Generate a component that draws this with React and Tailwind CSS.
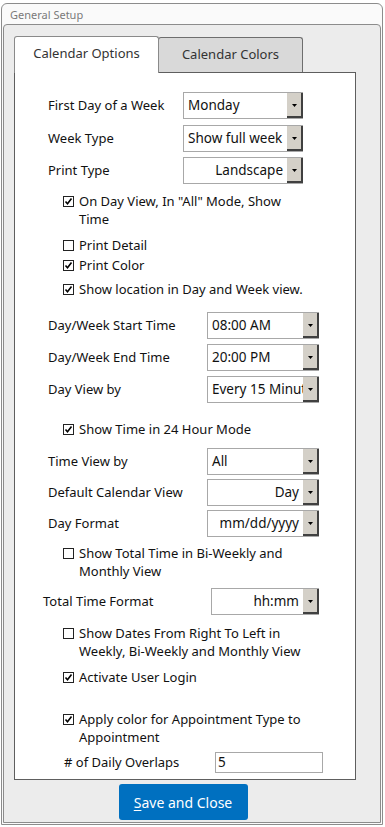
import React from 'react';

const font = { fontFamily: '"Noto Sans", "Open Sans", sans-serif' };

const Arrow = () => (
  <svg width="5" height="3" viewBox="0 0 5 3" className="mt-[2px]">
    <polygon points="0,0 5,0 2.5,3" fill="#000" />
  </svg>
);

const Select = ({ value, w, right }) => (
  <div className={`relative flex h-[27px] border border-[#a8a8a8] bg-white ${w}`}>
    <div
      className={`flex-1 overflow-hidden whitespace-nowrap leading-[25px] text-[13.5px] text-[#111] ${
        right ? 'pr-[4px] text-right' : 'pl-[4px]'
      }`}
    >
      {value}
    </div>
    <div className="-mr-[1px] flex w-[16px] items-center justify-center border-r-2 border-b-2 border-[#404040] bg-[#d4d0c8]">
      <Arrow />
    </div>
  </div>
);

const Box = ({ checked }) => (
  <div className="mt-[4px] flex h-[11px] w-[11px] shrink-0 items-center justify-center border border-[#222] bg-white">
    {checked && (
      <svg width="9" height="9" viewBox="0 0 9 9">
        <path d="M1.5 4.5 L3.5 6.8 L7.5 1.5" stroke="#000" strokeWidth="1.6" fill="none" />
      </svg>
    )}
  </div>
);

const Check = ({ checked, children, mt }) => (
  <div className={`flex gap-[5px] pl-[48px] leading-[18px] ${mt}`}>
    <Box checked={checked} />
    <div className="w-[230px]">{children}</div>
  </div>
);

const Row = ({ label, lw, pl, mt, children }) => (
  <div className={`flex items-center ${pl} ${mt}`}>
    <div className={`shrink-0 ${lw}`}>{label}</div>
    {children}
  </div>
);

export default function App() {
  return (
    <div className="min-h-[827px] bg-white pt-[3px] pl-[1px]" style={font}>
      <div className="w-[382px] rounded-t-[6px] border border-[#8c8c8c] bg-[#fafafa] px-[1px] pb-[1px]">
        <div className="h-[20px] pl-[7px] text-[11px] leading-[22px] text-[#7a7a7a]">General Setup</div>
        <div className="h-[799px] rounded-t-[4px] border border-[#8c8c8c] bg-[#ececec] pl-[10px] pt-[11px]">
          <div className="flex items-end">
            <div className="relative z-10 -mb-[1px] flex h-[37px] w-[145px] items-center justify-center rounded-t-[3px] border border-b-0 border-[#8a8a8a] bg-white pb-[2px] text-[13px] text-[#333]">
              Calendar Options
            </div>
            <div className="-ml-[1px] flex h-[35px] w-[145px] items-center justify-center rounded-t-[3px] border border-b-0 border-[#6e6e6e] bg-[#d9d9d9] text-[13px] text-[#333]">
              Calendar Colors
            </div>
          </div>
          <div className="h-[708px] w-[342px] border border-[#5e5e5e] bg-white text-[13px] text-[#111]">
            <Row label="First Day of a Week" lw="w-[135px]" pl="pl-[33px]" mt="mt-[19px]">
              <Select value="Monday" w="w-[120px]" />
            </Row>
            <Row label="Week Type" lw="w-[135px]" pl="pl-[33px]" mt="mt-[6px]">
              <Select value="Show full week" w="w-[120px]" />
            </Row>
            <Row label="Print Type" lw="w-[135px]" pl="pl-[33px]" mt="mt-[5px]">
              <Select value="Landscape" w="w-[120px]" right />
            </Row>
            <Check checked mt="mt-[8px]">On Day View, In "All" Mode, Show Time</Check>
            <Check mt="mt-[8px]">Print Detail</Check>
            <Check checked mt="mt-[2px]">Print Color</Check>
            <Check checked mt="mt-[6px]">Show location in Day and Week view.</Check>
            <Row label="Day/Week Start Time" lw="w-[159px]" pl="pl-[33px]" mt="mt-[14px]">
              <Select value="08:00 AM" w="w-[112px]" />
            </Row>
            <Row label="Day/Week End Time" lw="w-[159px]" pl="pl-[33px]" mt="mt-[5px]">
              <Select value="20:00 PM" w="w-[112px]" />
            </Row>
            <Row label="Day View by" lw="w-[159px]" pl="pl-[33px]" mt="mt-[5px]">
              <Select value="Every 15 Minutes" w="w-[112px]" />
            </Row>
            <Check checked mt="mt-[17px]">Show Time in 24 Hour Mode</Check>
            <Row label="Time View by" lw="w-[159px]" pl="pl-[33px]" mt="mt-[10px]">
              <Select value="All" w="w-[112px]" />
            </Row>
            <Row label="Default Calendar View" lw="w-[159px]" pl="pl-[33px]" mt="mt-[4px]">
              <Select value="Day" w="w-[112px]" right />
            </Row>
            <Row label="Day Format" lw="w-[159px]" pl="pl-[33px]" mt="mt-[4px]">
              <Select value="mm/dd/yyyy" w="w-[112px]" right />
            </Row>
            <Check mt="mt-[7px]">Show Total Time in Bi-Weekly and Monthly View</Check>
            <Row label="Total Time Format" lw="w-[168px]" pl="pl-[28px]" mt="mt-[8px]">
              <Select value="hh:mm" w="w-[108px]" right />
            </Row>
            <Check mt="mt-[9px]">Show Dates From Right To Left in Weekly, Bi-Weekly and Monthly View</Check>
            <Check checked mt="mt-[8px]">Activate User Login</Check>
            <Check checked mt="mt-[24px]">Apply color for Appointment Type to Appointment</Check>
            <Row label="# of Daily Overlaps" lw="w-[151px]" pl="pl-[49px]" mt="mt-[6px]">
              <div className="h-[21px] w-[108px] border border-[#a8a8a8] pl-[2px] leading-[19px] text-[13.5px]">5</div>
            </Row>
          </div>
          <div className="mt-[4px] flex w-[342px] justify-center pr-[4px]">
            <button className="h-[36px] w-[129px] rounded-[3px] bg-[#0070c0] text-[14px] text-white">
              <span className="underline underline-offset-2">S</span>ave and Close
            </button>
          </div>
        </div>
      </div>
    </div>
  );
}
